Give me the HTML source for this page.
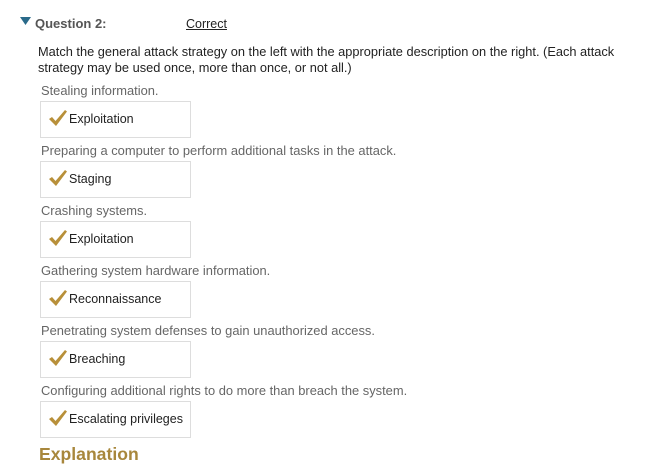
<!DOCTYPE html>
<html><head><style>
body{margin:0;background:#fff;font-family:"Liberation Sans",sans-serif;width:649px;height:465px;overflow:hidden;position:relative}
.a{position:absolute;white-space:nowrap}
.lab{position:absolute;left:41px;font-size:12.9px;color:#666}
.box{position:absolute;left:40px;width:151px;height:37px;border:1px solid #ddd;box-sizing:border-box}
.box span{position:absolute;left:28px;top:10px;font-size:12.5px;color:#222}
.box svg{position:absolute;left:7px;top:7px}
</style></head><body>
<svg class="a" style="left:20px;top:17px" width="11" height="9"><polygon points="0,0 11,0 5.5,8" fill="#2a6a8a"/></svg>
<div class="a" style="left:35px;top:16px;font-size:13px;font-weight:bold;color:#555">Question 2:</div>
<div class="a" style="left:186px;top:17px;font-size:12.5px;color:#222;text-decoration:underline">Correct</div>
<div class="a" style="left:38px;top:44px;font-size:12.8px;color:#222;line-height:16px;white-space:normal;width:582px">Match the general attack strategy on the left with the appropriate description on the right. (Each attack strategy may be used once, more than once, or not all.)</div>

<div class="lab" style="top:83px">Stealing information.</div>
<div class="box" style="top:101px"><svg width="20" height="18" viewBox="0 0 20 18"><path d="M1 10 L4 8 L7.5 12 L17 1 L19 2.5 L8 17 Z" fill="#b8903a"/></svg><span>Exploitation</span></div>
<div class="lab" style="top:143px">Preparing a computer to perform additional tasks in the attack.</div>
<div class="box" style="top:161px"><svg width="20" height="18" viewBox="0 0 20 18"><path d="M1 10 L4 8 L7.5 12 L17 1 L19 2.5 L8 17 Z" fill="#b8903a"/></svg><span>Staging</span></div>
<div class="lab" style="top:203px">Crashing systems.</div>
<div class="box" style="top:221px"><svg width="20" height="18" viewBox="0 0 20 18"><path d="M1 10 L4 8 L7.5 12 L17 1 L19 2.5 L8 17 Z" fill="#b8903a"/></svg><span>Exploitation</span></div>
<div class="lab" style="top:263px">Gathering system hardware information.</div>
<div class="box" style="top:281px"><svg width="20" height="18" viewBox="0 0 20 18"><path d="M1 10 L4 8 L7.5 12 L17 1 L19 2.5 L8 17 Z" fill="#b8903a"/></svg><span>Reconnaissance</span></div>
<div class="lab" style="top:323px">Penetrating system defenses to gain unauthorized access.</div>
<div class="box" style="top:341px"><svg width="20" height="18" viewBox="0 0 20 18"><path d="M1 10 L4 8 L7.5 12 L17 1 L19 2.5 L8 17 Z" fill="#b8903a"/></svg><span>Breaching</span></div>
<div class="lab" style="top:383px">Configuring additional rights to do more than breach the system.</div>
<div class="box" style="top:401px"><svg width="20" height="18" viewBox="0 0 20 18"><path d="M1 10 L4 8 L7.5 12 L17 1 L19 2.5 L8 17 Z" fill="#b8903a"/></svg><span>Escalating privileges</span></div>
<div class="a" style="left:39px;top:444px;font-size:17.6px;font-weight:bold;color:#a8873c">Explanation</div>
</body></html>
